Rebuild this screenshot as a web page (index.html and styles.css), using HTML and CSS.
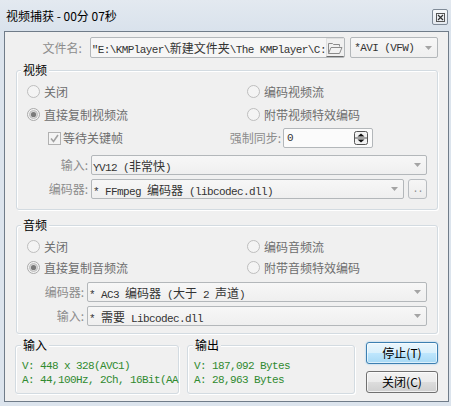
FILE: index.html
```html
<!DOCTYPE html>
<html>
<head>
<meta charset="utf-8">
<link rel="stylesheet" href="styles.css">
</head>
<body>
<div class="window">
  <div class="titlebar">
    <span class="title">视频捕获 - 00分 07秒</span>
    <span class="close">
      <svg width="9" height="9" viewBox="0 0 9 9"><rect x="0.5" y="0.5" width="8" height="8" fill="none" stroke="#555"/><path d="M2 2 L7 7 M7 2 L2 7" stroke="#333" stroke-width="1.2"/></svg>
    </span>
  </div>
  <div class="client">
    <div class="file-row">
      <span class="lbl lbl-file">文件名:</span>
      <div class="edit file-edit">
        <span class="mono">"E:\KMPlayer\<span class="cj">新建文件夹</span>\The KMPlayer\C:</span>
        <span class="folder-btn">
          <svg width="16" height="14" viewBox="0 0 16 14"><path d="M1.5 12.5 V2.5 H5.5 L6.5 3.5 H12.5 V5.5" fill="none" stroke="#8a8a8a"/><path d="M1.5 12.5 L4 6.5 H15 L12.5 12.5 Z" fill="#f2f2f2" stroke="#8a8a8a"/></svg>
        </span>
      </div>
      <div class="combo fmt"><span class="mono">*AVI (VFW)</span><svg class="arrow" width="7" height="4" viewBox="0 0 7 4"><path d="M0 0 H7 L3.5 4 Z" fill="#a4a4a4"/></svg></div>
    </div>

    <div class="group video">
      <div class="legend">视频</div>
      <div class="cols vrow">
        <div class="opt"><svg class="rd" width="13" height="13" viewBox="0 0 13 13"><circle cx="6.5" cy="6.5" r="6" fill="#f4f4f4" stroke="#bdbdbd"/></svg><span>关闭</span></div>
        <div class="opt"><svg class="rd" width="13" height="13" viewBox="0 0 13 13"><circle cx="6.5" cy="6.5" r="6" fill="#f4f4f4" stroke="#bdbdbd"/></svg><span>编码视频流</span></div>
      </div>
      <div class="cols vrow">
        <div class="opt"><svg class="rd" width="13" height="13" viewBox="0 0 13 13"><circle cx="6.5" cy="6.5" r="6" fill="#f4f4f4" stroke="#a9a9a9"/><circle cx="6.5" cy="6.5" r="4" fill="#d8d8d8" stroke="#bdbdbd"/><circle cx="6.5" cy="6.5" r="2.6" fill="#7a7a7a"/></svg><span>直接复制视频流</span></div>
        <div class="opt"><svg class="rd" width="13" height="13" viewBox="0 0 13 13"><circle cx="6.5" cy="6.5" r="6" fill="#f4f4f4" stroke="#bdbdbd"/></svg><span>附带视频特效编码</span></div>
      </div>
      <div class="sync-row">
        <div class="opt chk"><svg width="13" height="13" viewBox="0 0 13 13"><rect x="0.5" y="0.5" width="12" height="12" fill="#f4f4f4" stroke="#b1b1b1"/><path d="M3 6.5 L5.5 9.5 L10 3" fill="none" stroke="#a2a2a2" stroke-width="1.6"/></svg><span>等待关键帧</span></div>
        <span class="lbl lbl-sync">强制同步:</span>
        <div class="edit spin"><span class="mono">0</span>
          <svg class="spin-btn" width="14" height="14" viewBox="0 0 14 14"><rect x="0.5" y="0.5" width="13" height="13" rx="2" fill="#f2f2f2" stroke="#555"/><line x1="1" y1="7" x2="13" y2="7" stroke="#555"/><path d="M3.5 5.5 L7 2.5 L10.5 5.5 Z" fill="#111"/><path d="M3.5 8.5 L7 11.5 L10.5 8.5 Z" fill="#111"/></svg>
        </div>
      </div>
      <div class="field-row first">
        <span class="lbl lbl-v">输入:</span>
        <div class="combo grow"><span class="mono">YV12 (<span class="cj">非常快</span>)</span><svg class="arrow" width="7" height="4" viewBox="0 0 7 4"><path d="M0 0 H7 L3.5 4 Z" fill="#a4a4a4"/></svg></div>
      </div>
      <div class="field-row">
        <span class="lbl lbl-v">编码器:</span>
        <div class="combo grow"><span class="mono">* FFmpeg <span class="cj">编码器</span> (libcodec.dll)</span><svg class="arrow" width="7" height="4" viewBox="0 0 7 4"><path d="M0 0 H7 L3.5 4 Z" fill="#a4a4a4"/></svg></div>
        <div class="dots">..</div>
      </div>
    </div>

    <div class="group audio">
      <div class="legend">音频</div>
      <div class="cols arow">
        <div class="opt"><svg class="rd" width="13" height="13" viewBox="0 0 13 13"><circle cx="6.5" cy="6.5" r="6" fill="#f4f4f4" stroke="#bdbdbd"/></svg><span>关闭</span></div>
        <div class="opt"><svg class="rd" width="13" height="13" viewBox="0 0 13 13"><circle cx="6.5" cy="6.5" r="6" fill="#f4f4f4" stroke="#bdbdbd"/></svg><span>编码音频流</span></div>
      </div>
      <div class="cols arow">
        <div class="opt"><svg class="rd" width="13" height="13" viewBox="0 0 13 13"><circle cx="6.5" cy="6.5" r="6" fill="#f4f4f4" stroke="#a9a9a9"/><circle cx="6.5" cy="6.5" r="4" fill="#d8d8d8" stroke="#bdbdbd"/><circle cx="6.5" cy="6.5" r="2.6" fill="#7a7a7a"/></svg><span>直接复制音频流</span></div>
        <div class="opt"><svg class="rd" width="13" height="13" viewBox="0 0 13 13"><circle cx="6.5" cy="6.5" r="6" fill="#f4f4f4" stroke="#bdbdbd"/></svg><span>附带音频特效编码</span></div>
      </div>
      <div class="field-row first-a">
        <span class="lbl lbl-a">编码器:</span>
        <div class="combo grow"><span class="mono">* AC3 <span class="cj">编码器</span> (<span class="cj">大于</span> 2 <span class="cj">声道</span>)</span><svg class="arrow" width="7" height="4" viewBox="0 0 7 4"><path d="M0 0 H7 L3.5 4 Z" fill="#a4a4a4"/></svg></div>
      </div>
      <div class="field-row">
        <span class="lbl lbl-a">输入:</span>
        <div class="combo grow"><span class="mono">* <span class="cj">需要</span> Libcodec.dll</span><svg class="arrow" width="7" height="4" viewBox="0 0 7 4"><path d="M0 0 H7 L3.5 4 Z" fill="#a4a4a4"/></svg></div>
      </div>
    </div>

    <div class="bottom-row">
      <div class="group io in-box">
        <div class="legend">输入</div>
        <div class="io-text">
          <div>V: 448 x 328(AVC1)</div>
          <div>A: 44,100Hz, 2Ch, 16Bit(AA</div>
        </div>
      </div>
      <div class="group io out-box">
        <div class="legend">输出</div>
        <div class="io-text">
          <div>V: 187,092 Bytes</div>
          <div>A: 28,963 Bytes</div>
        </div>
      </div>
      <div class="buttons">
        <div class="btn default">停止(T)</div>
        <div class="btn">关闭(C)</div>
      </div>
    </div>
  </div>
</div>
</body>
</html>
```
FILE: styles.css
```css
* { box-sizing: border-box; }
html, body { margin: 0; padding: 0; }
body {
  width: 451px;
  height: 406px;
  overflow: hidden;
  background: #dce4ed;
  font-family: "Noto Sans CJK SC", "Noto Sans", sans-serif;
  font-size: 12px;
  color: #000;
}
.window {
  width: 451px;
  height: 406px;
  display: flex;
  flex-direction: column;
}
.titlebar {
  height: 31px;
  flex: none;
  display: flex;
  align-items: center;
  justify-content: space-between;
  padding: 0 3px 0 6px;
  background: linear-gradient(#e3e9f0, #d9e2ec);
}
.title { line-height: 14px; margin-top: 1px; }
.close {
  width: 16px;
  height: 16px;
  margin-top: 3px;
  border: 1px solid #7f8a97;
  border-radius: 2px;
  background: linear-gradient(#f6f8fa, #e4e9ef);
  display: flex;
  align-items: center;
  justify-content: center;
}
.client {
  flex: 1;
  margin: 0 2px 4px 4px;
  border: 1px solid #707c89;
  background: #f0f0f0;
  padding: 5px 10px 0 11px;
  display: flex;
  flex-direction: column;
}
.lbl { color: #8c8c8c; line-height: 14px; white-space: nowrap; }
.mono {
  font-family: "Liberation Mono", monospace;
  font-size: 11px;
  letter-spacing: -0.6px;
  color: #333;
  white-space: nowrap;
}
.cj {
  font-family: "Noto Sans CJK SC", sans-serif;
  font-size: 12px;
  letter-spacing: 0;
}
.edit, .combo {
  height: 20px;
  border: 1px solid #b3b7ba;
  border-radius: 2px;
  background: #f6f6f6;
  display: flex;
  align-items: center;
  overflow: hidden;
}
.combo { background: linear-gradient(#f7f7f7, #efefef); }
.arrow { margin-left: auto; margin-right: 5px; flex: none; }

.file-row { display: flex; align-items: center; height: 21px; flex: none; }
.lbl-file { width: 66px; text-align: right; margin-right: 8px; }
.file-edit { width: 256px; height: 21px; padding-left: 1px; }
.folder-btn {
  margin-left: auto;
  width: 19px;
  height: 19px;
  flex: none;
  border: 1px solid;
  border-color: #e0e0e0 #6c6c6c #6c6c6c #e0e0e0;
  background: #f0f0f0;
  display: flex;
  align-items: center;
  justify-content: center;
}
.fmt { width: 88px; height: 21px; margin-left: 5px; padding-left: 3px; }

.group {
  border: 1px solid #d3dbe1;
  border-radius: 3px;
  box-shadow: inset 1px 1px 0 #fff, 1px 1px 0 #fff;
  flex: none;
}
.legend {
  width: max-content;
  height: 14px;
  line-height: 14px;
  margin: -8px 0 0 -6px;
  padding: 0 2px;
  background: #f0f0f0;
  color: #000;
}
.video { margin-top: 12px; padding: 0 10px 10px 10px; }
.video .legend { margin-bottom: 3px; }
.audio { margin-top: 15px; padding: 0 10px 7px 10px; }
.audio .legend { margin-bottom: 4px; }

.cols { display: grid; grid-template-columns: 220px 1fr; align-items: center; }
.vrow { height: 23px; }
.arow { height: 21px; }
.opt { display: flex; align-items: center; gap: 4px; color: #6d6d6d; line-height: 14px; white-space: nowrap; }
.opt svg { flex: none; }

.sync-row { display: flex; align-items: center; height: 24px; }
.chk { margin-left: 21px; width: 177px; gap: 2px; }
.lbl-sync { width: 56px; text-align: right; color: #8c8c8c; }
.spin { width: 90px; height: 20px; margin-left: 2px; padding-left: 3px; background: #fbfbfb; }
.spin-btn { margin-left: auto; margin-right: 4px; }

.field-row { display: flex; align-items: center; height: 20px; margin-top: 4px; }
.field-row.first { margin-top: 5px; }
.field-row.first-a { margin-top: 4px; }
.lbl-v { width: 61px; text-align: right; margin-right: 3px; }
.lbl-a { width: 57px; text-align: right; margin-right: 3px; }
.grow { flex: 1; padding-left: 1px; }
.dots {
  width: 19px;
  height: 20px;
  margin-left: 4px;
  border: 1px solid #b8bcc0;
  border-radius: 3px;
  background: linear-gradient(#f6f6f6, #ececec);
  color: #8c8c8c;
  font-family: "Liberation Mono", monospace;
  font-size: 10px;
  display: flex;
  align-items: flex-end;
  justify-content: center;
  line-height: 12px;
  padding-bottom: 2px;
  letter-spacing: -1px;
}

.bottom-row { display: flex; align-items: flex-start; margin-top: 8px; margin-left: -1px; }
.io { margin-top: 3px; padding: 0 0 6px 6px; }
.io .legend { margin: -8px 0 7px -1px; }
.in-box { width: 164px; }
.out-box { width: 168px; margin-left: 8px; }
.io-text {
  font-family: "Liberation Mono", monospace;
  font-size: 11px;
  letter-spacing: -0.6px;
  line-height: 14px;
  color: #2f8a2f;
  white-space: nowrap;
}
.buttons { display: flex; flex-direction: column; gap: 7px; margin-left: 11px; width: 72px; }
.btn {
  height: 22px;
  border: 1px solid #707070;
  border-radius: 3px;
  background: linear-gradient(#f2f2f2 0%, #ebebeb 50%, #dddddd 51%, #cfcfcf 100%);
  box-shadow: inset 0 0 0 1px rgba(255,255,255,0.7);
  display: flex;
  align-items: center;
  justify-content: center;
  line-height: 14px;
}
.btn.default {
  border-color: #3c7fb1;
  background: linear-gradient(#eaf6fd 0%, #d9f0fc 50%, #bee6fd 51%, #a7d9f5 100%);
  box-shadow: inset 0 0 0 1px rgba(255,255,255,0.6), 0 0 2px #8ec6ee;
}
```
